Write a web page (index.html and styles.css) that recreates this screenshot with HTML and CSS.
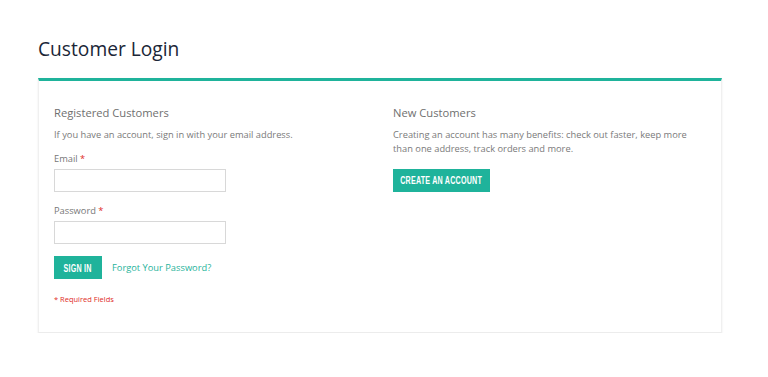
FILE: index.html
```html
<!DOCTYPE html>
<html>
<head>
<meta charset="utf-8">
<link rel="stylesheet" href="styles.css">
</head>
<body>
<main class="page">
  <h1 class="title">Customer Login</h1>
  <section class="card">
    <div class="col">
      <h2 class="col-title">Registered Customers</h2>
      <p class="note">If you have an account, sign in with your email address.</p>
      <div class="field">
        <label class="label">Email <span class="req">*</span></label>
        <input class="input" type="text">
      </div>
      <div class="field">
        <label class="label">Password <span class="req">*</span></label>
        <input class="input" type="password">
      </div>
      <div class="actions">
        <button class="btn btn-signin"><span class="btn-text">SIGN IN</span></button>
        <a class="link" href="#">Forgot Your Password?</a>
      </div>
      <p class="required">* Required Fields</p>
    </div>
    <div class="col">
      <h2 class="col-title">New Customers</h2>
      <p class="note note-wide">Creating an account has many benefits: check out faster, keep more than one address, track orders and more.</p>
      <button class="btn btn-create"><span class="btn-text">CREATE AN ACCOUNT</span></button>
    </div>
  </section>
</main>
</body>
</html>
```
FILE: styles.css
```css
* { box-sizing: border-box; }
body {
  margin: 0;
  background: #fff;
  font-family: "Open Sans", "Liberation Sans", sans-serif;
  color: #777;
}
.page {
  padding: 35px 46px 0 38px;
}
.title {
  margin: 0 0 15px;
  font-size: 19.2px;
  font-weight: 400;
  color: #1b2637;
  line-height: 28px;
}
.card {
  border-top: 3px solid #1fb39b;
  border-left: 1px solid #f0f0f0;
  border-right: 1px solid #f0f0f0;
  border-bottom: 1px solid #ececec;
  background: #fff;
  box-shadow: 0 1px 2px rgba(0,0,0,0.08);
  padding: 23px 15px 20px;
  display: grid;
  grid-template-columns: 1fr 1fr;
  column-gap: 26px;
  height: 255px;
}
.col-title {
  margin: 0 0 6px;
  font-size: 11.2px;
  font-weight: 400;
  color: #6f6f6f;
  line-height: 18px;
}
.note {
  margin: 0 0 10px;
  font-size: 9.3px;
  line-height: 14px;
  color: #7a7a7a;
  max-width: 320px;
}
.note-wide { margin-bottom: 11px; }
.field {
  margin-bottom: 12px;
}
.label {
  display: block;
  font-size: 9.3px;
  line-height: 14px;
  color: #777;
  margin-bottom: 3px;
}
.req { color: #e02b27; }
.input {
  display: block;
  width: 172px;
  height: 23px;
  border: 1px solid #d8d8d8;
  background: #fff;
  border-radius: 0;
  margin: 0;
}
.actions {
  display: flex;
  align-items: center;
  gap: 10px;
  margin-top: 12px;
}
.btn {
  display: inline-flex;
  align-items: center;
  justify-content: center;
  background: #1fb39b;
  color: #fff;
  border: 0;
  height: 23px;
  padding: 0;
  overflow: visible;
  font-family: "Liberation Sans", "Arial", sans-serif;
  font-weight: 700;
  font-size: 10.5px;
  cursor: pointer;
}
.btn-signin { width: 48px; }
.btn-create { width: 97px; }
.btn-text {
  display: inline-block;
  white-space: nowrap;
  transform: scaleX(0.68);
  letter-spacing: 0.3px;
}
.link {
  color: #1fb39b;
  font-size: 9.3px;
  text-decoration: none;
}
.required {
  margin: 15px 0 0;
  font-size: 7.5px;
  color: #e02b27;
}
```
